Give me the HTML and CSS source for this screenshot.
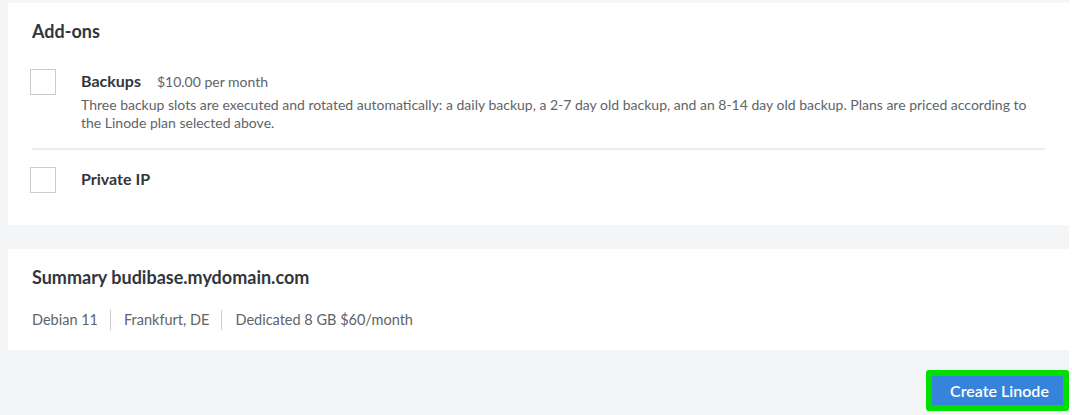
FILE: index.html
```html
<!DOCTYPE html>
<html>
<head>
<meta charset="utf-8">
<link rel="stylesheet" href="styles.css">
</head>
<body>
<div class="page">
  <section class="panel addons">
    <h2 class="heading">Add-ons</h2>
    <div class="option option-first">
      <span class="checkbox"></span>
      <div class="option-body">
        <div class="option-title"><span class="option-name">Backups</span><span class="option-price">$10.00 per month</span></div>
        <p class="option-desc">Three backup slots are executed and rotated automatically: a daily backup, a 2-7 day old backup, and an 8-14 day old backup. Plans are priced according to the Linode plan selected above.</p>
      </div>
    </div>
    <div class="divider"></div>
    <div class="option option-center">
      <span class="checkbox"></span>
      <div class="option-body">
        <div class="option-title"><span class="option-name">Private IP</span></div>
      </div>
    </div>
  </section>
  <section class="panel summary">
    <h2 class="heading">Summary budibase.mydomain.com</h2>
    <div class="summary-items">
      <span class="summary-item">Debian 11</span>
      <span class="summary-item">Frankfurt, DE</span>
      <span class="summary-item">Dedicated 8 GB $60/month</span>
    </div>
  </section>
  <div class="actions">
    <button class="create-btn">Create Linode</button>
  </div>
</div>
</body>
</html>
```

FILE: styles.css
```css
* { box-sizing: border-box; }
html, body { margin: 0; padding: 0; background: #ffffff; }
body {
  font-family: Lato, "Noto Sans", sans-serif;
  color: #606469;
  width: 1072px;
  height: 415px;
  overflow: hidden;
}
.page {
  width: 1069px;
  height: 415px;
  background: #f4f5f6;
  padding: 3px 0 0 8px;
}
.panel {
  background: #ffffff;
  padding: 0 24px;
}
.heading {
  margin: 0;
  font-size: 18px;
  line-height: 22px;
  font-weight: 700;
  color: #32363c;
}
.addons {
  height: 222px;
  padding-top: 17px;
}
.option {
  display: flex;
  align-items: flex-start;
  margin-left: -2px;
}
.option-first { margin-top: 27px; }
.option-center { align-items: center; margin-top: 17px; }
.checkbox {
  flex: none;
  width: 26px;
  height: 26px;
  border: 1px solid #cccccc;
  background: #fff;
  margin-right: 25px;
}
.option-body { flex: 1; }
.option-first .option-body { margin-top: 2px; }
.option-title {
  display: flex;
  align-items: baseline;
  line-height: 20px;
}
.option-name {
  font-size: 16px;
  font-weight: 700;
  color: #32363c;
}
.option-center .option-title { margin-top: -2px; }
.option-price {
  font-size: 14px;
  margin-left: 16px;
  color: #606469;
}
.option-desc {
  margin: 4px 0 0;
  font-size: 14px;
  line-height: 18px;
  padding-right: 10px;
}
.divider {
  height: 2px;
  background: #ececec;
  margin-top: 16px;
}
.summary {
  margin-top: 24px;
  height: 101px;
  padding-top: 17px;
}
.summary-items {
  display: flex;
  margin-top: 22px;
  font-size: 14.5px;
  line-height: 20px;
}
.summary-item {
  padding: 0 12px 0 13px;
  border-left: 1px solid #cfcfcf;
}
.summary-item:first-child {
  padding-left: 0;
  border-left: none;
}
.actions {
  display: flex;
  justify-content: flex-end;
  margin-top: 20px;
}
.create-btn {
  font-family: Lato, "Noto Sans", sans-serif;
  font-size: 16px;
  font-weight: 600;
  color: #ffffff;
  background: #3683dc;
  border: 6px solid #00e000;
  border-radius: 3px;
  height: 41px;
  width: 143px;
  padding: 0 0 0 4px;
  line-height: 29px;
}
```
